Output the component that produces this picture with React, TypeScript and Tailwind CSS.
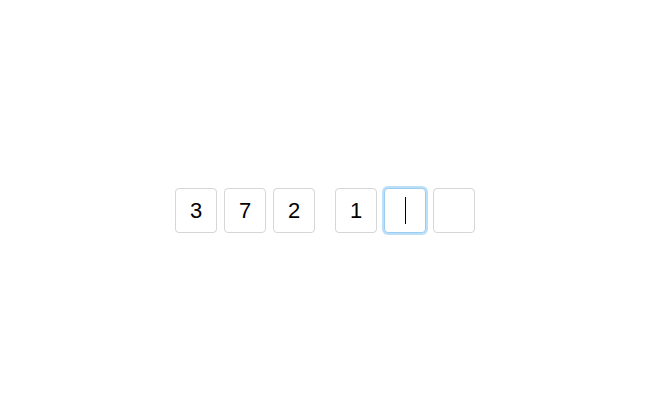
const first = ['3', '7', '2'];
const second = ['1', '', ''];

function Cell({ value, focused }: { value: string; focused?: boolean }) {
  return (
    <div
      className={
        'w-[42px] h-[45px] rounded-[4px] bg-white flex items-center justify-center text-[22px] text-black ' +
        (focused
          ? 'border border-[#9ccdf1] shadow-[0_0_0_2px_#bcdff8]'
          : 'border border-[#d6d6d6]')
      }
    >
      {focused ? <span className="block w-px h-[27px] bg-black" /> : value}
    </div>
  );
}

export default function App() {
  return (
    <div
      className="w-[650px] h-[420px] bg-white flex items-center justify-center"
      style={{ fontFamily: '"Liberation Sans", Arial, sans-serif' }}
    >
      <div className="flex items-center gap-[20px] mt-[1px]">
        <div className="flex gap-[7px]">
          {first.map((v, i) => (
            <Cell key={i} value={v} />
          ))}
        </div>
        <div className="flex gap-[7px]">
          {second.map((v, i) => (
            <Cell key={i} value={v} focused={i === 1} />
          ))}
        </div>
      </div>
    </div>
  );
}
